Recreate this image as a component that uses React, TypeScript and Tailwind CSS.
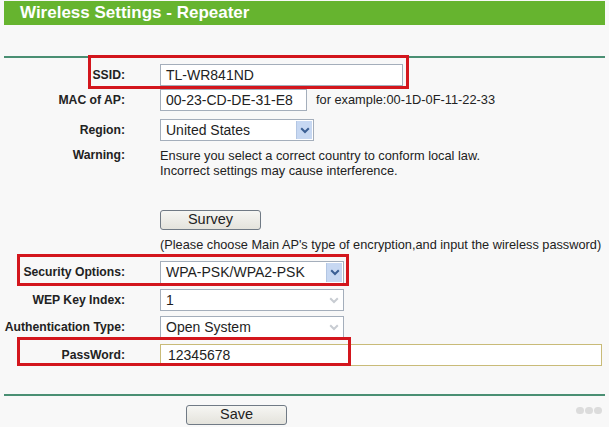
import React from "react";

function Chevron({ active }: { active: boolean }) {
  return (
    <div
      className={
        active
          ? "w-[16px] h-full bg-[#c7d8f2] border-l border-[#b3c6e3] flex items-center justify-center"
          : "w-[16px] h-full flex items-center justify-center"
      }
    >
      <svg width="10" height="7" viewBox="0 0 10 7">
        <path
          d="M1.2 1.2 L5 5 L8.8 1.2"
          fill="none"
          stroke={active ? "#3b5f94" : "#c8ccd2"}
          strokeWidth="2"
        />
      </svg>
    </div>
  );
}

function Select({ value, width, active, height }: { value: string; width: string; active: boolean; height: string }) {
  return (
    <div className={`${width} ${height} border border-[#a4aebb] bg-white flex items-stretch`}>
      <div className="flex-1 pl-[5px] flex items-center text-[14px] text-[#1e1e1e]">{value}</div>
      <div className="py-px pr-px">
        <Chevron active={active} />
      </div>
    </div>
  );
}

export default function App() {
  const label = "w-[125px] text-right font-bold text-[12.2px] text-[#222] shrink-0";
  return (
    <div className="w-[609px] h-[427px] bg-[#f8f8f8] relative overflow-hidden font-['Liberation_Sans',Arial,sans-serif] text-[#222]">
      <div className="pt-px px-1">
        <div className="h-[24px] bg-[#66b42f] text-white font-bold text-[17px] leading-[24px] pl-4">
          Wireless Settings - Repeater
        </div>
      </div>
      <div className="mt-[31px] mx-1 h-[2px] bg-[#4a8f73]" />

      <div className="flex flex-col">
        <div className="mt-[6px] h-[22px] flex items-center">
          <div className={label}>SSID:</div>
          <div className="ml-[35px] w-[243px] h-[22px] border border-[#a4aebb] bg-white flex items-center pl-[5px] text-[14px]">
            TL-WR841ND
          </div>
        </div>
        <div className="mt-[3px] h-[22px] flex items-center">
          <div className={label}>MAC of AP:</div>
          <div className="ml-[35px] w-[147px] h-[22px] border border-[#a4aebb] bg-white flex items-center pl-[5px] text-[14px]">
            00-23-CD-DE-31-E8
          </div>
          <div className="ml-[9px] text-[12.8px]">for example:00-1D-0F-11-22-33</div>
        </div>
        <div className="mt-[8px] h-[22px] flex items-center">
          <div className={label}>Region:</div>
          <div className="ml-[35px]">
            <Select value="United States" width="w-[154px]" height="h-[22px]" active />
          </div>
        </div>
        <div className="mt-[7px] flex items-start">
          <div className={`${label} leading-[15px]`}>Warning:</div>
          <div className="ml-[35px] text-[12.8px] leading-[15px]">
            Ensure you select a correct country to conform local law.
            <br />
            Incorrect settings may cause interference.
          </div>
        </div>
        <div className="mt-[32px] flex">
          <div className="w-[160px] shrink-0" />
          <div className="w-[101px] h-[20px] border border-[#707a85] rounded-[3px] bg-gradient-to-b from-[#f6f6f3] to-[#e4e3dc] flex items-center justify-center text-[14.5px]">
            Survey
          </div>
        </div>
        <div className="mt-[7px] flex h-[16px] items-center">
          <div className="w-[160px] shrink-0" />
          <div className="text-[12.75px] whitespace-nowrap">
            (Please choose Main AP's type of encryption,and input the wireless password)
          </div>
        </div>
        <div className="mt-[8px] h-[23px] flex items-center">
          <div className={label}>Security Options:</div>
          <div className="ml-[35px]">
            <Select value="WPA-PSK/WPA2-PSK" width="w-[184px]" height="h-[23px]" active />
          </div>
        </div>
        <div className="mt-[5px] h-[22px] flex items-center">
          <div className={label}>WEP Key Index:</div>
          <div className="ml-[35px]">
            <Select value="1" width="w-[184px]" height="h-[22px]" active={false} />
          </div>
        </div>
        <div className="mt-[5px] h-[22px] flex items-center">
          <div className={label}>Authentication Type:</div>
          <div className="ml-[35px]">
            <Select value="Open System" width="w-[184px]" height="h-[22px]" active={false} />
          </div>
        </div>
        <div className="mt-[6px] h-[22px] flex items-center">
          <div className={label}>PassWord:</div>
          <div className="ml-[35px] w-[442px] h-[22px] border border-[#c9bb78] bg-white flex items-center pl-[7px] text-[14px]">
            12345678
          </div>
        </div>
      </div>

      <div className="mt-[28px] mx-1 h-[2px] bg-[#4a8f73]" />
      <div className="mt-[9px] flex">
        <div className="w-[186px] shrink-0" />
        <div className="w-[101px] h-[20px] border border-[#707a85] rounded-[3px] bg-gradient-to-b from-[#f6f6f3] to-[#e4e3dc] flex items-center justify-center text-[14.5px]">
          Save
        </div>
      </div>

      {/* watermark */}
      <div className="absolute left-[576px] top-[407px] flex gap-[1px]">
        <div className="w-[8px] h-[7px] rounded-full bg-[#dcdcdc]" />
        <div className="w-[8px] h-[7px] rounded-full bg-[#dcdcdc]" />
        <div className="w-[8px] h-[7px] rounded-full bg-[#dcdcdc]" />
      </div>

      {/* red annotation boxes */}
      <div className="absolute left-[88px] top-[55px] w-[321px] h-[34px] border-[3px] border-[#d3161d]" />
      <div className="absolute left-[17px] top-[254px] w-[332px] h-[32px] border-[3px] border-[#d3161d]" />
      <div className="absolute left-[17px] top-[337px] w-[334px] h-[29px] border-[3px] border-[#d3161d]" />
    </div>
  );
}
